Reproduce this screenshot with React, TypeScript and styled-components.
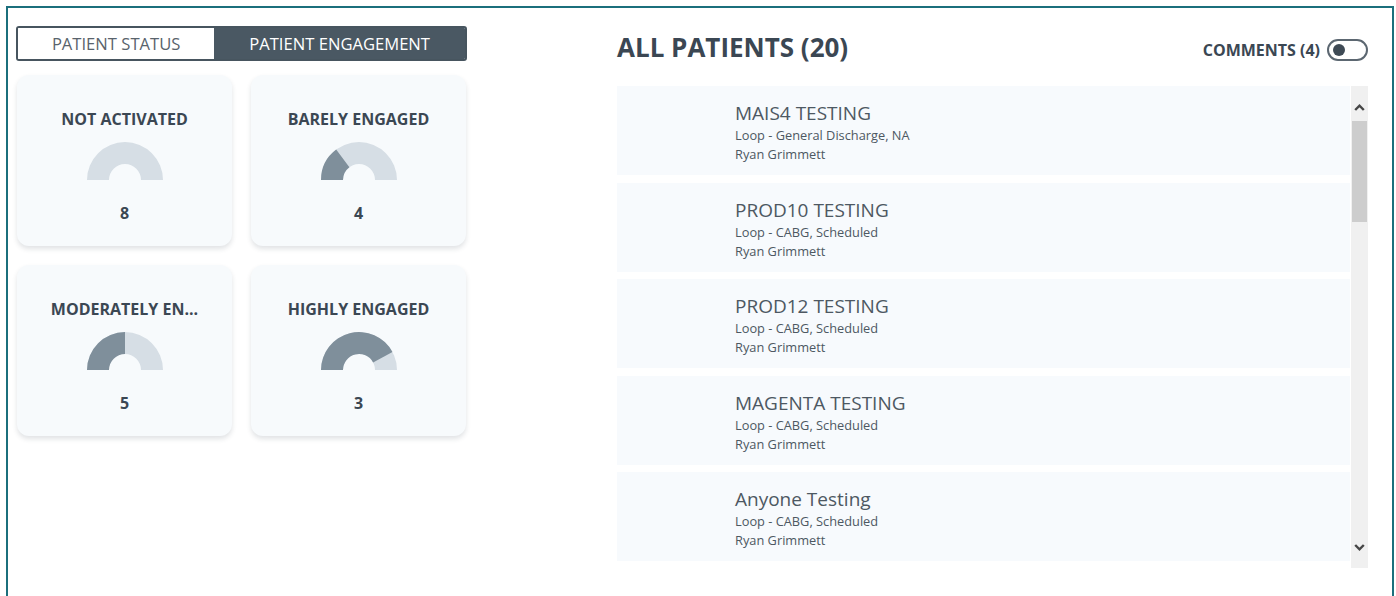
import React from "react";
import styled, { createGlobalStyle } from "styled-components";

const GlobalStyle = createGlobalStyle`
  html, body {
    margin: 0;
    padding: 0;
    background: #ffffff;
    font-family: "Open Sans", "Liberation Sans", sans-serif;
    overflow: hidden;
  }
`;

interface EngagementGroup {
  id: number;
  label: string;
  count: number;
  share: number;
}

interface Patient {
  id: number;
  name: string;
  program: string;
  clinician: string;
}

const groups: EngagementGroup[] = [
  { id: 1, label: "NOT ACTIVATED", count: 8, share: 0 },
  { id: 2, label: "BARELY ENGAGED", count: 4, share: 0.295 },
  { id: 3, label: "MODERATELY EN...", count: 5, share: 0.5 },
  { id: 4, label: "HIGHLY ENGAGED", count: 3, share: 0.843 },
];

const patients: Patient[] = [
  { id: 1, name: "MAIS4 TESTING", program: "Loop - General Discharge, NA", clinician: "Ryan Grimmett" },
  { id: 2, name: "PROD10 TESTING", program: "Loop - CABG, Scheduled", clinician: "Ryan Grimmett" },
  { id: 3, name: "PROD12 TESTING", program: "Loop - CABG, Scheduled", clinician: "Ryan Grimmett" },
  { id: 4, name: "MAGENTA TESTING", program: "Loop - CABG, Scheduled", clinician: "Ryan Grimmett" },
  { id: 5, name: "Anyone Testing", program: "Loop - CABG, Scheduled", clinician: "Ryan Grimmett" },
];

const Frame = styled.div`
  box-sizing: border-box;
  margin: 6px 0 0 6px;
  width: 1388px;
  height: 590px;
  border: 2px solid #1b6f7c;
  border-bottom: none;
  padding: 18px 24px 0 8px;
  display: flex;
  gap: 150px;
`;

const LeftColumn = styled.div`
  width: 451px;
  display: flex;
  flex-direction: column;
`;

const Segmented = styled.div`
  display: flex;
  height: 35px;
  box-sizing: border-box;
  border: 2px solid #47555f;
  border-radius: 3px;
  overflow: hidden;
`;

const Segment = styled.div<{ $active?: boolean; $width: number }>`
  width: ${(p) => p.$width}px;
  display: flex;
  align-items: center;
  justify-content: center;
  font-size: 16.6px;
  color: ${(p) => (p.$active ? "#ffffff" : "#59636c")};
  background: ${(p) => (p.$active ? "#4a5863" : "#ffffff")};
`;

const CardGrid = styled.div`
  margin-top: 14px;
  padding-left: 1px;
  display: grid;
  grid-template-columns: 215px 215px;
  gap: 19px;
`;

const Card = styled.div`
  height: 171px;
  box-sizing: border-box;
  padding-top: 34px;
  background: #f7fafc;
  border-radius: 12px;
  box-shadow: 0 3px 5px rgba(40, 55, 70, 0.14);
  display: flex;
  flex-direction: column;
  align-items: center;
`;

const CardTitle = styled.div`
  font-size: 16px;
  line-height: 20px;
  font-weight: 700;
  color: #3b4753;
`;

const GaugeBox = styled.svg`
  margin-top: 13px;
  display: block;
`;

const CardCount = styled.div`
  margin-top: 23px;
  font-size: 16px;
  line-height: 20px;
  font-weight: 700;
  color: #3b4753;
`;

const RightColumn = styled.div`
  flex: 1;
  display: flex;
  flex-direction: column;
`;

const Header = styled.div`
  height: 42px;
  display: flex;
  align-items: center;
  justify-content: space-between;
`;

const Title = styled.h1`
  margin: 0;
  font-size: 26px;
  line-height: 42px;
  font-weight: 700;
  color: #3b4753;
`;

const CommentsToggle = styled.div`
  display: flex;
  align-items: center;
  gap: 7px;
  padding-top: 5px;
  font-size: 16px;
  font-weight: 700;
  color: #3b4753;
`;

const Switch = styled.div`
  box-sizing: border-box;
  width: 41px;
  height: 22px;
  border: 2px solid #5c6771;
  border-radius: 11px;
  display: flex;
  align-items: center;
  padding-left: 4px;
`;

const Knob = styled.div`
  width: 12px;
  height: 12px;
  border-radius: 50%;
  background: #3e4a55;
`;

const ListArea = styled.div`
  margin-top: 18px;
  height: 482px;
  display: flex;
  gap: 1px;
`;

const Rows = styled.div`
  flex: 1;
  overflow: hidden;
  display: flex;
  flex-direction: column;
  gap: 7.5px;
`;

const Row = styled.div`
  flex: 0 0 89px;
  box-sizing: border-box;
  padding: 14px 0 0 118px;
  background: #f7fafd;
  color: #4d5862;
`;

const PatientName = styled.div`
  font-size: 19px;
  line-height: 26px;
`;

const PatientMeta = styled.div`
  font-size: 12.8px;
  line-height: 19px;
`;

const ScrollTrack = styled.div`
  width: 17px;
  background: #f0f0f0;
  display: flex;
  flex-direction: column;
  align-items: center;
`;

const ScrollArrow = styled.div<{ $down?: boolean }>`
  height: 35px;
  width: 100%;
  box-sizing: border-box;
  display: flex;
  justify-content: center;
  align-items: ${(p) => (p.$down ? "flex-start" : "flex-end")};
  padding: ${(p) => (p.$down ? "11px 0 0" : "0 0 10px")};
`;

const ScrollThumb = styled.div`
  width: 15px;
  height: 101px;
  background: #cdcdcd;
`;

const Spacer = styled.div`
  flex: 1;
`;

// ring slice of a half donut; angles in degrees, 180 = left, 0 = right
const slice = (cx: number, cy: number, r0: number, r1: number, a0: number, a1: number) => {
  const pt = (r: number, a: number) => {
    const rad = (a * Math.PI) / 180;
    return `${(cx + r * Math.cos(rad)).toFixed(2)} ${(cy - r * Math.sin(rad)).toFixed(2)}`;
  };
  return `M ${pt(r1, a0)} A ${r1} ${r1} 0 0 1 ${pt(r1, a1)} L ${pt(r0, a1)} A ${r0} ${r0} 0 0 0 ${pt(r0, a0)} Z`;
};

const Gauge: React.FC<{ share: number }> = ({ share }) => {
  const edge = 180 - 180 * share;
  return (
    <GaugeBox width="76" height="38" viewBox="0 0 76 38">
      <path d={slice(38, 38, 16, 38, 180, 0)} fill="#d6dee5" />
      {share > 0 && <path d={slice(38, 38, 16, 38, 180, edge)} fill="#7f8f9b" />}
    </GaugeBox>
  );
};

const Chevron: React.FC<{ up?: boolean }> = ({ up }) => (
  <svg width="11" height="8" viewBox="0 0 11 8">
    <polyline
      points={up ? "1.2,7 5.5,2.6 9.8,7" : "1.2,1 5.5,5.4 9.8,1"}
      fill="none"
      stroke="#464646"
      strokeWidth="2.4"
    />
  </svg>
);

export default function App() {
  return (
    <>
      <GlobalStyle />
      <Frame>
        <LeftColumn>
          <Segmented>
            <Segment $width={198}>PATIENT STATUS</Segment>
            <Segment $width={253} $active>
              PATIENT ENGAGEMENT
            </Segment>
          </Segmented>
          <CardGrid>
            {groups.map((g) => (
              <Card key={g.id}>
                <CardTitle>{g.label}</CardTitle>
                <Gauge share={g.share} />
                <CardCount>{g.count}</CardCount>
              </Card>
            ))}
          </CardGrid>
        </LeftColumn>

        <RightColumn>
          <Header>
            <Title>ALL PATIENTS (20)</Title>
            <CommentsToggle>
              COMMENTS (4)
              <Switch>
                <Knob />
              </Switch>
            </CommentsToggle>
          </Header>
          <ListArea>
            <Rows>
              {patients.map((p) => (
                <Row key={p.id}>
                  <PatientName>{p.name}</PatientName>
                  <PatientMeta>{p.program}</PatientMeta>
                  <PatientMeta>{p.clinician}</PatientMeta>
                </Row>
              ))}
            </Rows>
            <ScrollTrack>
              <ScrollArrow>
                <Chevron up />
              </ScrollArrow>
              <ScrollThumb />
              <Spacer />
              <ScrollArrow $down>
                <Chevron />
              </ScrollArrow>
            </ScrollTrack>
          </ListArea>
        </RightColumn>
      </Frame>
    </>
  );
}
